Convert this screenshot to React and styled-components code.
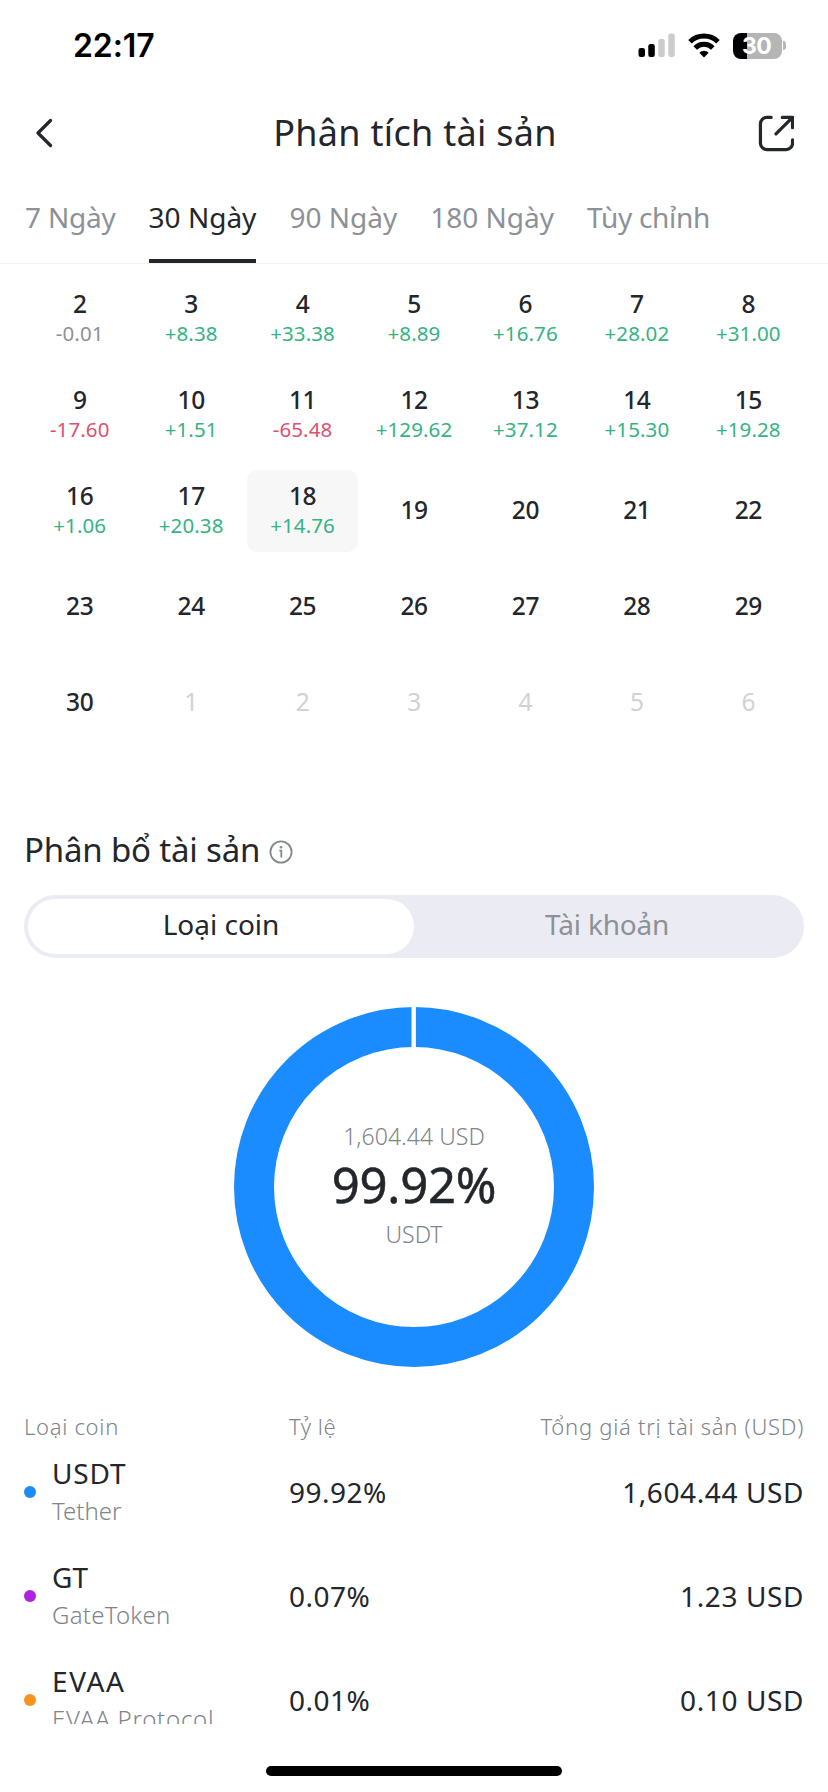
import React from 'react';
import styled, { createGlobalStyle } from 'styled-components';

const INK = '#23262b';
const GRAY = '#8d9197';
const GREEN = '#35b383';
const RED = '#e0506f';

const GlobalStyle = createGlobalStyle`
  *, *::before, *::after { box-sizing: border-box; }
  body { margin: 0; background: #fff; }
`;

const Screen = styled.div`
  width: 828px;
  height: 1792px;
  display: flex;
  flex-direction: column;
  overflow: hidden;
  background: #fff;
  color: ${INK};
  font-family: 'Noto Sans', sans-serif;
  white-space: nowrap;
`;

const StatusBar = styled.header`
  height: 91px;
  padding: 0 42px 0 73px;
  display: flex;
  align-items: center;
  justify-content: space-between;
`;

const Clock = styled.time`
  font: 600 32px/40px Inter, sans-serif;
  letter-spacing: -0.1px;
  color: #000;
`;

const StatusIcons = styled.div`
  display: flex;
  align-items: center;
  gap: 12.5px;
`;

const BatteryWrap = styled.div`
  display: flex;
  align-items: center;
  gap: 1px;
`;

const BatteryBody = styled.div`
  width: 49px;
  height: 26px;
  border-radius: 8px;
  background: linear-gradient(90deg, #000 0 14.5px, #b5b5b5 14.5px);
  color: #fff;
  font: 700 23px/27px Inter, sans-serif;
  letter-spacing: -0.6px;
  text-align: center;
  padding-right: 1px;
`;

const BatteryTip = styled.div`
  width: 3.5px;
  height: 9px;
  border-radius: 0 4px 4px 0;
  background: #b5b5b5;
`;

const TitleBar = styled.div`
  height: 82px;
  padding: 1px 34px 0 36px;
  display: grid;
  grid-template-columns: 36px 1fr 36px;
  align-items: center;
`;

const IconButton = styled.button`
  display: flex;
  padding: 0;
  border: 0;
  background: none;
  color: ${INK};
`;

const PageTitle = styled.h1`
  margin: 0;
  font-size: 36px;
  line-height: 50px;
  font-weight: 400;
  letter-spacing: 0.3px;
  text-align: center;
`;

const Tabs = styled.nav`
  height: 91px;
  flex: none;
  padding: 24px 0 0 25px;
  display: flex;
  align-items: flex-start;
  gap: 33px;
  border-bottom: 1px solid #f1f2f4;
`;

const Tab = styled.button`
  height: 66px;
  padding: 0 0 22px;
  border: 0;
  border-bottom: 4px solid ${p => (p.$active ? INK : 'transparent')};
  background: none;
  font: 400 28px/40px 'Noto Sans', sans-serif;
  letter-spacing: ${p => p.$ls}px;
  color: ${p => (p.$active ? INK : GRAY)};
`;

const Content = styled.main`
  height: 1460px;
  flex: none;
  overflow: hidden;
  padding: 14px 24px 0;
`;

const Calendar = styled.div`
  display: grid;
  grid-template-columns: repeat(7, 1fr);
  grid-auto-rows: 82px;
  row-gap: 14px;
`;

const DayCell = styled.div`
  display: flex;
  flex-direction: column;
  align-items: center;
  justify-content: center;
  padding-bottom: 2px;
  border-radius: 10px;
  background: ${p => (p.$selected ? '#f7f7f8' : 'transparent')};
`;

const DayNumber = styled.span`
  font-size: 24.5px;
  line-height: 30px;
  font-weight: ${p => (p.$muted ? 400 : 500)};
  letter-spacing: -0.4px;
  color: ${p => (p.$muted ? '#d0d2d5' : INK)};
`;

const DayValue = styled.span`
  font-size: 20.5px;
  line-height: 28px;
  letter-spacing: 0.1px;
  color: ${p => p.$color};
`;

const SectionTitle = styled.h2`
  margin: 86px 0 25px;
  display: flex;
  align-items: center;
  gap: 9px;
  font-size: 33px;
  line-height: 40px;
  font-weight: 400;
  letter-spacing: -0.18px;
`;

const InfoIcon = styled.svg`
  width: 24px;
  height: 24px;
  margin-top: 4px;
`;

const Segment = styled.div`
  height: 63px;
  padding: 4px;
  display: grid;
  grid-template-columns: 1fr 1fr;
  border-radius: 32px;
  background: #ebecf3;
`;

const SegmentOption = styled.button`
  border: 0;
  padding: 0 0 5px;
  border-radius: 28px;
  background: ${p => (p.$active ? '#fff' : 'transparent')};
  color: ${p => (p.$active ? INK : GRAY)};
  font: 400 28px/40px 'Noto Sans', sans-serif;
  letter-spacing: ${p => p.$ls}px;
`;

const Donut = styled.div`
  width: 360px;
  height: 360px;
  margin: 48.5px auto 45.5px;
  display: grid;
  > * { grid-area: 1 / 1; }
`;

const DonutText = styled.div`
  display: flex;
  flex-direction: column;
  align-items: center;
  justify-content: center;
  padding-bottom: 4px;
`;

const DonutLabel = styled.span`
  font-size: 23px;
  line-height: 30px;
  font-weight: 300;
  letter-spacing: 0.05px;
  color: #80848b;
`;

const DonutPercent = styled.strong`
  margin-bottom: 2px;
  font-size: 49px;
  line-height: 66px;
  font-weight: 400;
  letter-spacing: -0.25px;
  -webkit-text-stroke: 0.5px ${INK};
`;

const TableLine = styled.div`
  display: grid;
  grid-template-columns: 265px 150px 1fr;
  align-items: center;
`;

const TableHead = styled(TableLine)`
  height: 28px;
  font-size: 22px;
  line-height: 28px;
  font-weight: 300;
  color: #80848b;
`;

const HeadCell = styled.span`
  letter-spacing: ${p => p.$ls}px;
  text-align: ${p => (p.$end ? 'right' : 'left')};
`;

const CoinRow = styled(TableLine)`
  height: 104px;
  font-size: 28px;
`;

const Coin = styled.div`
  display: flex;
  align-items: center;
  gap: 16px;
`;

const Dot = styled.i`
  width: 12px;
  height: 12px;
  border-radius: 50%;
  background: ${p => p.$color};
`;

const CoinNames = styled.div`
  display: flex;
  flex-direction: column;
  line-height: 37px;
`;

const Symbol = styled.span`
  letter-spacing: ${p => p.$ls}px;
`;

const CoinName = styled.span`
  font-size: 24px;
  font-weight: 300;
  letter-spacing: ${p => p.$ls}px;
  color: #80848b;
`;

const Percent = styled.span`
  letter-spacing: 0.5px;
`;

const Amount = styled.span`
  letter-spacing: 0.6px;
  text-align: right;
`;

const HomeArea = styled.footer`
  flex: 1;
  padding-top: 42px;
  display: flex;
  justify-content: center;
  align-items: flex-start;
`;

const HomeIndicator = styled.div`
  width: 296px;
  height: 10px;
  border-radius: 5px;
  background: #000;
`;

const tabs = [
  ['7 Ngày', -0.2],
  ['30 Ngày', 0],
  ['90 Ngày', 0],
  ['180 Ngày', 0],
  ['Tùy chỉnh', -0.3],
];

const values = [
  '-0.01', '+8.38', '+33.38', '+8.89', '+16.76', '+28.02', '+31.00',
  '-17.60', '+1.51', '-65.48', '+129.62', '+37.12', '+15.30', '+19.28',
  '+1.06', '+20.38', '+14.76',
];

const days = Array.from({ length: 35 }, (_, i) => ({
  day: i < 29 ? i + 2 : i - 28,
  muted: i >= 29,
  value: values[i],
}));

const valueColor = v => (v === '-0.01' ? GRAY : v[0] === '+' ? GREEN : RED);

const coins = [
  { symbol: 'USDT', sls: 0.85, name: 'Tether', nls: 0, color: '#1d8bf5', pct: '99.92%', amount: '1,604.44 USD' },
  { symbol: 'GT', sls: 0, name: 'GateToken', nls: 0.25, color: '#ae22e0', pct: '0.07%', amount: '1.23 USD' },
  { symbol: 'EVAA', sls: 1.6, name: 'EVAA Protocol', nls: 0.76, color: '#f8931f', pct: '0.01%', amount: '0.10 USD' },
];

const Signal = () => (
  <svg width="38" height="26" viewBox="0 0 38 26">
    <rect x="0.5" y="15" width="6.5" height="9" rx="2.2" fill="#000" />
    <rect x="10.3" y="11" width="6.5" height="13" rx="2.2" fill="#000" />
    <rect x="20.3" y="6" width="6.5" height="18" rx="2.2" fill="#ccc" />
    <rect x="30.3" y="0.5" width="6.5" height="23.5" rx="2.2" fill="#ccc" />
  </svg>
);

const Wifi = () => (
  <svg width="32" height="26" viewBox="0 0 32 26" fill="none" stroke="#000" strokeWidth="5">
    <path d="M2 8.700a20 20 0 0 1 28 0" />
    <path d="M7.200 14.900a12.400 12.400 0 0 1 17.600 0" />
    <path d="M16 24.500l-4.700-4.800a6.700 6.700 0 0 1 9.400 0z" fill="#000" stroke="none" />
  </svg>
);

const BackIcon = () => (
  <svg width="18" height="30" viewBox="0 0 18 30" fill="none" stroke="currentColor" strokeWidth="3.2" strokeLinecap="round" strokeLinejoin="round">
    <path d="M14.5 2.5L2 15l12.5 12.5" />
  </svg>
);

const ShareIcon = () => (
  <svg width="37" height="38" viewBox="0 0 37 38" fill="none" stroke="currentColor" strokeWidth="3.3" strokeLinecap="round" strokeLinejoin="round">
    <path d="M13.500 3H9a6.500 6.500 0 0 0-6.500 6.500v20a6.500 6.500 0 0 0 6.500 6.500h20a6.500 6.500 0 0 0 6.500-6.500V26" />
    <path d="M25 3H35.500V13.500M35.500 3L18.500 20" />
  </svg>
);

export default function App() {
  return (
    <>
      <GlobalStyle />
      <Screen>
        <StatusBar>
          <Clock>22:17</Clock>
          <StatusIcons>
            <Signal />
            <Wifi />
            <BatteryWrap>
              <BatteryBody>30</BatteryBody>
              <BatteryTip />
            </BatteryWrap>
          </StatusIcons>
        </StatusBar>
        <TitleBar>
          <IconButton aria-label="Quay lại"><BackIcon /></IconButton>
          <PageTitle>Phân tích tài sản</PageTitle>
          <IconButton aria-label="Chia sẻ"><ShareIcon /></IconButton>
        </TitleBar>
        <Tabs>
          {tabs.map(([label, ls]) => (
            <Tab key={label} $ls={ls} $active={label === '30 Ngày'}>{label}</Tab>
          ))}
        </Tabs>
        <Content>
          <Calendar>
            {days.map(({ day, muted, value }, i) => (
              <DayCell key={i} $selected={!muted && day === 18}>
                <DayNumber $muted={muted}>{day}</DayNumber>
                {value && <DayValue $color={valueColor(value)}>{value}</DayValue>}
              </DayCell>
            ))}
          </Calendar>
          <SectionTitle>
            Phân bổ tài sản
            <InfoIcon viewBox="0 0 24 24" fill="none" stroke="#85898f" strokeWidth="1.8">
              <circle cx="12" cy="12" r="10.6" />
              <path d="M10.300 10.700H12.300V17.500" />
              <circle cx="12" cy="7.200" r="1.300" fill="#85898f" stroke="none" />
            </InfoIcon>
          </SectionTitle>
          <Segment>
            <SegmentOption $active $ls={0}>Loại coin</SegmentOption>
            <SegmentOption $ls={-0.2}>Tài khoản</SegmentOption>
          </Segment>
          <Donut>
            <svg width="360" height="360" viewBox="0 0 360 360">
              <circle cx="180" cy="180" r="160" fill="none" stroke="#1a8cff" strokeWidth="40" />
              <path d="M179.700 0V41" stroke="#fff" strokeWidth="4.400" />
            </svg>
            <DonutText>
              <DonutLabel>1,604.44 USD</DonutLabel>
              <DonutPercent>99.92%</DonutPercent>
              <DonutLabel>USDT</DonutLabel>
            </DonutText>
          </Donut>
          <TableHead>
            <HeadCell $ls={0.7}>Loại coin</HeadCell>
            <HeadCell $ls={0.5}>Tỷ lệ</HeadCell>
            <HeadCell $ls={0.72} $end>Tổng giá trị tài sản (USD)</HeadCell>
          </TableHead>
          {coins.map(c => (
            <CoinRow key={c.symbol}>
              <Coin>
                <Dot $color={c.color} />
                <CoinNames>
                  <Symbol $ls={c.sls}>{c.symbol}</Symbol>
                  <CoinName $ls={c.nls}>{c.name}</CoinName>
                </CoinNames>
              </Coin>
              <Percent>{c.pct}</Percent>
              <Amount>{c.amount}</Amount>
            </CoinRow>
          ))}
        </Content>
        <HomeArea>
          <HomeIndicator />
        </HomeArea>
      </Screen>
    </>
  );
}
